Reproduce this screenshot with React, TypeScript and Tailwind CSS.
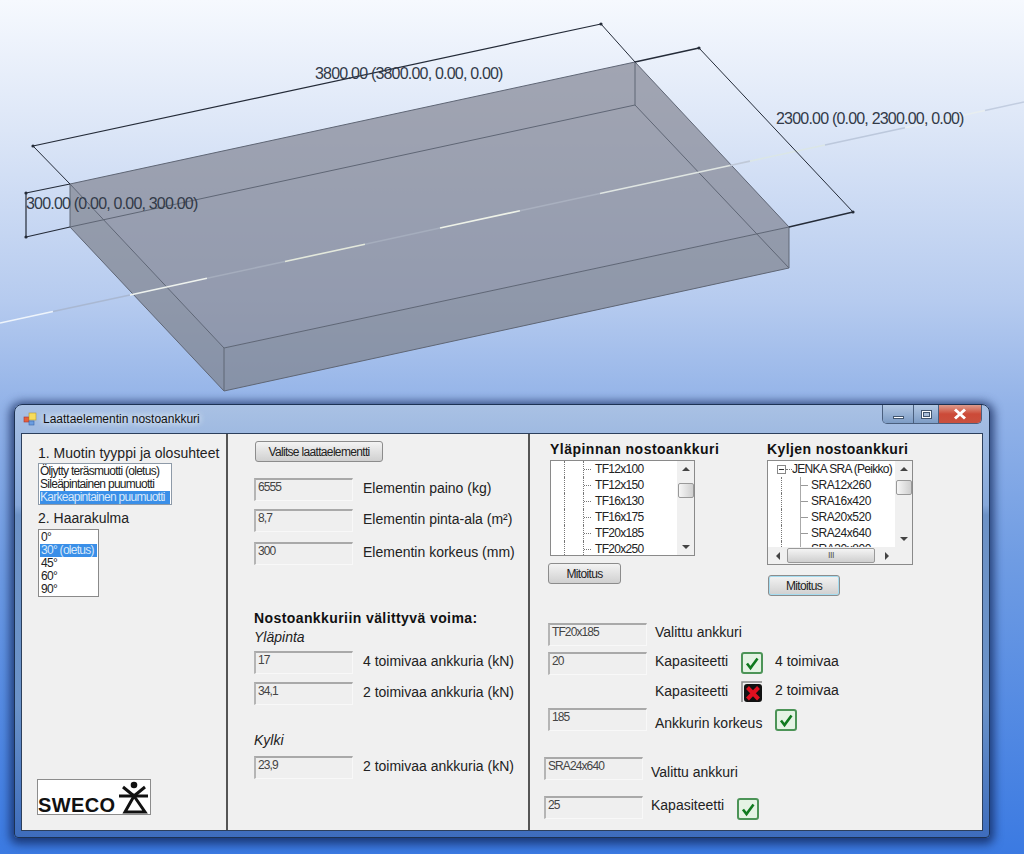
import React from 'react'

const font = "font-['Liberation_Sans',Arial,sans-serif]"

const axisSegments = [
  { x1: 0, x2: 53, color: '#eef4fb' },
  { x1: 53, x2: 130, color: '#a9b8d2' },
  { x1: 130, x2: 207, color: '#eef2ee' },
  { x1: 207, x2: 285, color: '#a5adbd' },
  { x1: 285, x2: 365, color: '#e3e8dc' },
  { x1: 365, x2: 440, color: '#a5adbd' },
  { x1: 440, x2: 520, color: '#eef2e8' },
  { x1: 520, x2: 600, color: '#a9b0bf' },
  { x1: 600, x2: 730, color: '#dfe5e2' },
  { x1: 730, x2: 750, color: '#c0c9d8' },
  { x1: 750, x2: 825, color: '#dbe6e6' },
  { x1: 825, x2: 905, color: '#bcc8dc' },
  { x1: 905, x2: 985, color: '#e8eef0' },
  { x1: 985, x2: 1024, color: '#c2cde0' },
]

const axisY = (x: number) => 323 - (x * 221) / 1024

function SlabDrawing() {
  return (
    <svg width="1024" height="404" viewBox="0 0 1024 404" className="block">
      <polygon points="70,184 635,62 789,227 224,348" fill="#858896" fillOpacity="0.72" />
      <polygon points="70,184 224,348 224,391 70,227" fill="#80838f" fillOpacity="0.72" />
      <polygon points="224,348 789,227 789,268 224,391" fill="#80838f" fillOpacity="0.72" />
      <g stroke="#5f6675" strokeWidth="1" fill="none">
        <path d="M70 184 L635 62 L789 227 L224 348 Z" />
        <path d="M70 184 V227 L224 391 V348 M224 391 L789 268 V227" />
        <path d="M70 227 L635 105 L789 268 M635 62 V105" />
      </g>
      {axisSegments.map((s, i) => (
        <line
          key={i}
          x1={s.x1}
          y1={axisY(s.x1)}
          x2={s.x2}
          y2={axisY(s.x2)}
          stroke={s.color}
          strokeWidth="1.6"
        />
      ))}
      <g stroke="#242b38" fill="none">
        <path d="M33 146 L601 24" strokeWidth="1.2" />
        <path d="M33 146 L70 184 M601 24 L635 62" strokeWidth="1" />
        <path d="M635 62 L699 48 M789 227 L853 212" strokeWidth="1.3" />
        <path d="M699 48 L853 212" strokeWidth="1" />
        <path d="M26 193 L70 184 M26 237 L70 227 M26 193 V237" strokeWidth="1.2" />
      </g>
      {[[33, 146], [601, 24], [699, 48], [853, 212], [26, 193], [26, 237]].map(([cx, cy], i) => (
        <circle key={i} cx={cx} cy={cy} r="1.6" fill="#242b38" />
      ))}
    </svg>
  )
}

function Dimension({ className, children }: { className: string; children: React.ReactNode }) {
  return (
    <span className={`absolute whitespace-nowrap text-[16px] leading-[18px] tracking-[-0.8px] text-[#323a48] ${className}`}>
      {children}
    </span>
  )
}

function Field({ value }: { value: string }) {
  return (
    <div className="h-[23px] w-[99px] shrink-0 border-t-2 border-l-2 border-t-[#a9a9a9] border-l-[#b5b5b5] border-b border-r border-b-[#f8f8f8] border-r-[#f8f8f8] bg-[#efefef] pl-[2px] text-[12px] leading-[14px] tracking-[-0.9px] text-[#444]">
      {value}
    </div>
  )
}

function Label({ children, className = '' }: { children: React.ReactNode; className?: string }) {
  return <span className={`whitespace-nowrap text-[14px] leading-[18px] text-[#222] ${className}`}>{children}</span>
}

function ValueRow({ value, label, className = '' }: { value: string; label: string; className?: string }) {
  return (
    <div className={`flex gap-[10px] ${className}`}>
      <Field value={value} />
      <Label className="leading-[20px]">{label}</Label>
    </div>
  )
}

function Button({ children, className = '' }: { children: React.ReactNode; className?: string }) {
  return (
    <button className={`h-[21px] rounded-[3px] border border-[#8c8c8c] bg-gradient-to-b from-[#f3f3f3] to-[#d0d0d0] text-center text-[12px] leading-[18px] tracking-[-0.67px] text-[#222] ${className}`}>
      {children}
    </button>
  )
}

function StatusCheck({ className = '' }: { className?: string }) {
  return (
    <svg width="22" height="22" viewBox="0 0 22 22" className={`shrink-0 ${className}`}>
      <rect x="1" y="1" width="20" height="20" rx="2" fill="#e4f3e4" stroke="#4c9457" strokeWidth="2" />
      <path d="M6 11.5 L9.5 16 L16.5 6.5" fill="none" stroke="#0f7a1e" strokeWidth="2.6" />
    </svg>
  )
}

function StatusCross() {
  return (
    <svg width="22" height="22" viewBox="0 0 22 22" className="shrink-0">
      <path d="M1 21 V1 H21" fill="none" stroke="#888" strokeWidth="1.5" />
      <rect x="3" y="3" width="18" height="18" rx="3" fill="#111" />
      <path d="M6.5 6.5 L17.5 18 M17.5 6.5 L6.5 18" stroke="#e01020" strokeWidth="4" />
    </svg>
  )
}

function Triangle({ dir }: { dir: 'up' | 'down' | 'left' | 'right' }) {
  const points = {
    up: '0,5 8,5 4,1',
    down: '0,2 8,2 4,6',
    left: '6,0 6,8 2,4',
    right: '2,0 2,8 6,4',
  }[dir]
  return (
    <svg width="8" height="8" viewBox="0 0 8 8">
      <polygon points={points} fill="#444" />
    </svg>
  )
}

function VerticalScroll({ thumbTop }: { thumbTop: string }) {
  return (
    <div className="flex w-[17px] shrink-0 flex-col items-center bg-[#f0f0f0]">
      <div className="flex h-[17px] items-center"><Triangle dir="up" /></div>
      <div className={`h-[15px] w-[16px] rounded-[2px] border border-[#999] bg-gradient-to-r from-[#f6f6f6] to-[#cfcfcf] ${thumbTop}`} />
      <div className="mt-auto flex h-[17px] items-center"><Triangle dir="down" /></div>
    </div>
  )
}

function TopTreeRow({ name }: { name: string }) {
  return (
    <div className="flex h-4 shrink-0 items-center">
      <span className="ml-[13px] h-4 w-[19px] border-l border-dotted border-[#777]" />
      <span className="flex h-4 w-[10px] items-center border-l border-dotted border-[#777]">
        <span className="w-[7px] border-t border-dotted border-[#777]" />
      </span>
      <span className="ml-[2px]">{name}</span>
    </div>
  )
}

function SideTreeRow({ name }: { name: string }) {
  return (
    <div className="flex h-4 shrink-0 items-center">
      <span className="ml-[13px] h-4 w-[19px] border-l border-dotted border-[#777]" />
      <span className="flex h-4 w-[11px] items-center border-l border-[#aaa]">
        <span className="w-[7px] border-t border-[#999]" />
      </span>
      <span>{name}</span>
    </div>
  )
}

const topAnchors = ['TF12x100', 'TF12x150', 'TF16x130', 'TF16x175', 'TF20x185', 'TF20x250']
const sideAnchors = ['SRA12x260', 'SRA16x420', 'SRA20x520', 'SRA24x640', 'SRA30x800']

function SwecoLogo() {
  return (
    <div className="-ml-px flex h-[36px] w-[114px] items-end border border-[#8c8c8c] bg-white">
      <span className="text-[20px] font-bold leading-[18px] tracking-[0.4px] text-[#111]">SWECO</span>
      <svg width="32" height="34" viewBox="0 0 32 34" className="ml-[1px] self-start">
        <circle cx="17" cy="5" r="3.3" fill="#111" />
        <path d="M2 16 H31" stroke="#111" strokeWidth="3" />
        <path d="M6 7 L17 16 L28 7" fill="none" stroke="#111" strokeWidth="3" />
        <path d="M17 16 L8 32 H28 Z" fill="none" stroke="#111" strokeWidth="3" />
      </svg>
    </div>
  )
}

function TitleBar() {
  return (
    <div className="flex h-[28px] shrink-0 items-start">
      <svg width="14" height="14" viewBox="0 0 14 14" className="ml-[2px] mt-[7px] shrink-0">
        <rect x="1" y="5" width="5" height="5" fill="#e4603a" stroke="#a33" strokeWidth="0.6" />
        <rect x="6" y="1" width="7" height="7" fill="#f7dc5c" stroke="#b99a2a" strokeWidth="0.6" />
        <rect x="6" y="9" width="5" height="4" fill="#6a9de0" stroke="#3a66a8" strokeWidth="0.6" />
      </svg>
      <span className="ml-[6px] mt-[6px] whitespace-nowrap text-[12px] leading-[16px] text-[#111] [text-shadow:0_0_6px_#eaf2fb,0_0_6px_#eaf2fb]">
        Laattaelementin nostoankkuri
      </span>
      <div className="ml-auto mr-[1px] flex h-[19px] overflow-hidden rounded-b-[5px] border border-t-0 border-[#4a5f7e]">
        <div className="flex w-[31px] items-center justify-center border-r border-[#4a5f7e] bg-gradient-to-b from-[#b2c7e3] to-[#7d9cc5]">
          <span className="mt-[6px] h-[3px] w-[11px] border border-[#42566f] bg-white" />
        </div>
        <div className="flex w-[25px] items-center justify-center border-r border-[#4a5f7e] bg-gradient-to-b from-[#b2c7e3] to-[#7d9cc5]">
          <span className="flex h-[9px] w-[11px] items-center justify-center border border-[#42566f] bg-white">
            <span className="h-[5px] w-[7px] border border-[#42566f] bg-[#a8bdd8]" />
          </span>
        </div>
        <div className="flex w-[42px] items-center justify-center bg-gradient-to-b from-[#dc9a8c] via-[#cc4a38] to-[#c9503e]">
          <svg width="14" height="12" viewBox="0 0 14 12">
            <path d="M2 1.5 L12 10.5 M12 1.5 L2 10.5" stroke="#fff" strokeWidth="3" />
          </svg>
        </div>
      </div>
    </div>
  )
}

export default function App() {
  return (
    <div className={`h-[854px] w-[1024px] overflow-hidden bg-[linear-gradient(180deg,#f6f9fe_0px,#dce6f7_130px,#b6cbef_300px,#93b3e8_404px,#6f9ce3_560px,#3b7ae2_854px)] ${font}`}>
      <div className="relative h-[404px]">
        <SlabDrawing />
        <Dimension className="left-[315px] top-[65px]">3800.00 (3800.00, 0.00, 0.00)</Dimension>
        <Dimension className="left-[776px] top-[110px]">2300.00 (0.00, 2300.00, 0.00)</Dimension>
        <Dimension className="left-[26px] top-[195px]">300.00 (0.00, 0.00, 300.00)</Dimension>
      </div>

      <div className="ml-[14px] flex h-[434px] w-[976px] flex-col rounded-t-[8px] rounded-b-[4px] border border-[#1d3253] bg-[linear-gradient(180deg,#a9c1e4_0px,#86a8da_100px,#6d92c6_110px,#6a92c8_300px,#3d6cbc_434px)] px-[6px] pb-[6px] shadow-[0_2px_10px_4px_rgba(15,35,85,0.75)]">
        <TitleBar />
        <div className="flex min-h-0 flex-1 border border-[#2c3f5c] bg-[#f0f0f0]">
          <div className="flex w-[206px] shrink-0 flex-col border-r-2 border-[#555] pb-[15px] pl-[16px] pt-[10px]">
            <span className="whitespace-nowrap text-[14px] leading-[18px] text-[#222]">1. Muotin tyyppi ja olosuhteet</span>
            <div className="mt-[1px] h-[42px] w-[134px] border border-[#8e9aa8] bg-white p-[1px] text-[12px] leading-[13px] tracking-[-0.72px] text-[#222]">
              <div className="whitespace-nowrap">Öljytty teräsmuotti (oletus)</div>
              <div className="whitespace-nowrap">Sileäpintainen puumuotti</div>
              <div className="whitespace-nowrap bg-[#3a8fe8] text-[#d8e8fa]">Karkeapintainen puumuotti</div>
            </div>
            <span className="mt-[4px] text-[14px] leading-[18px] text-[#222]">2. Haarakulma</span>
            <div className="mt-[2px] h-[68px] w-[61px] border border-[#8a8a8a] bg-white p-[1px] text-[12px] leading-[13px] tracking-[-0.72px] text-[#222]">
              <div className="px-[1px]">0°</div>
              <div className="whitespace-nowrap bg-[#3a8fe8] px-[1px] text-[#d8e8fa]">30° (oletus)</div>
              <div className="px-[1px]">45°</div>
              <div className="px-[1px]">60°</div>
              <div className="px-[1px]">90°</div>
            </div>
            <div className="mt-auto">
              <SwecoLogo />
            </div>
          </div>

          <div className="flex w-[302px] shrink-0 flex-col items-start border-r-2 border-[#555] pl-[26px] pt-[7px]">
            <Button className="ml-[1px] w-[128px]">Valitse laattaelementti</Button>
            <ValueRow className="mt-[16px]" value="6555" label="Elementin paino (kg)" />
            <ValueRow className="mt-[8px]" value="8,7" label="Elementin pinta-ala (m²)" />
            <ValueRow className="mt-[10px]" value="300" label="Elementin korkeus (mm)" />
            <span className="mt-[44px] whitespace-nowrap text-[14px] font-bold leading-[18px] tracking-[0.41px] text-[#111]">Nostoankkuriin välittyvä voima:</span>
            <span className="mt-[1px] text-[14px] italic leading-[18px] text-[#222]">Yläpinta</span>
            <ValueRow className="mt-[5px]" value="17" label="4 toimivaa ankkuria (kN)" />
            <ValueRow className="mt-[8px]" value="34,1" label="2 toimivaa ankkuria (kN)" />
            <span className="mt-[26px] text-[14px] italic leading-[18px] text-[#222]">Kylki</span>
            <ValueRow className="mt-[7px]" value="23,9" label="2 toimivaa ankkuria (kN)" />
          </div>

          <div className="flex min-w-0 flex-1 flex-col pt-[6px]">
            <div className="flex">
              <div className="ml-[20px] flex w-[217px] shrink-0 flex-col items-start">
                <span className="whitespace-nowrap text-[14px] font-bold leading-[18px] tracking-[0.48px] text-[#111]">Yläpinnan nostoankkuri</span>
                <div className="mt-[2px] flex h-[96px] w-[145px] overflow-hidden border border-[#8a8a8a] bg-white text-[12px] tracking-[-0.7px] text-[#222]">
                  <div className="flex min-w-0 flex-1 flex-col overflow-hidden">
                    {topAnchors.map((name) => (
                      <TopTreeRow key={name} name={name} />
                    ))}
                  </div>
                  <VerticalScroll thumbTop="mt-[5px]" />
                </div>
                <Button className="-ml-[2px] mt-[7px] w-[73px]">Mitoitus</Button>
              </div>

              <div className="flex flex-col items-start">
                <span className="whitespace-nowrap text-[14px] font-bold leading-[18px] tracking-[0.4px] text-[#111]">Kyljen nostoankkuri</span>
                <div className="mt-[2px] flex h-[105px] w-[146px] flex-col overflow-hidden border border-[#8a8a8a] bg-white text-[12px] tracking-[-0.45px] text-[#222]">
                  <div className="flex min-h-0 flex-1">
                    <div className="flex min-w-0 flex-1 flex-col overflow-hidden">
                      <div className="flex h-4 shrink-0 items-center whitespace-nowrap">
                        <span className="ml-[9px] flex h-[9px] w-[9px] items-center justify-center border border-[#888]">
                          <span className="w-[5px] border-t border-[#333]" />
                        </span>
                        <span className="w-[6px] border-t border-dotted border-[#777]" />
                        <span className="tracking-[-0.7px]">JENKA SRA (Peikko)</span>
                      </div>
                      {sideAnchors.map((name) => (
                        <SideTreeRow key={name} name={name} />
                      ))}
                    </div>
                    <VerticalScroll thumbTop="mt-[2px]" />
                  </div>
                  <div className="flex h-[17px] shrink-0 items-center bg-[#f0f0f0] pr-[16px]">
                    <div className="flex w-[19px] justify-center"><Triangle dir="left" /></div>
                    <div className="flex h-[15px] w-[88px] items-center justify-center rounded-[2px] border border-[#999] bg-gradient-to-b from-[#f4f4f4] to-[#cfcfcf] text-[9px] leading-none text-[#555]">III</div>
                    <div className="ml-auto flex w-[18px] justify-center"><Triangle dir="right" /></div>
                  </div>
                </div>
                <Button className="ml-[1px] mt-[10px] w-[72px] border-[#3c8fb5] shadow-[0_0_0_1px_#a4dcf0_inset]">Mitoitus</Button>
              </div>
            </div>

            <div className="ml-[18px] mt-[27px] flex gap-[8px]">
              <Field value="TF20x185" />
              <Label>Valittu ankkuri</Label>
            </div>
            <div className="ml-[18px] mt-[6px] flex gap-[8px]">
              <Field value="20" />
              <Label className="w-[78px]">Kapasiteetti</Label>
              <StatusCheck />
              <Label className="ml-[4px]">4 toimivaa</Label>
            </div>
            <div className="ml-[18px] mt-[6px] flex h-[23px] gap-[8px]">
              <div className="w-[99px]" />
              <Label className="mt-[1px] w-[78px]">Kapasiteetti</Label>
              <StatusCross />
              <Label className="ml-[4px]">2 toimivaa</Label>
            </div>
            <div className="ml-[18px] mt-[4px] flex gap-[8px]">
              <Field value="185" />
              <Label className="mt-[6px] w-[112px]">Ankkurin korkeus</Label>
              <StatusCheck className="mt-[1px]" />
            </div>
            <div className="ml-[14px] mt-[25px] flex gap-[8px]">
              <Field value="SRA24x640" />
              <Label className="mt-[6px]">Valittu ankkuri</Label>
            </div>
            <div className="ml-[14px] mt-[15px] flex gap-[8px]">
              <Field value="25" />
              <Label className="w-[78px]">Kapasiteetti</Label>
              <StatusCheck className="mt-[2px]" />
            </div>
          </div>
        </div>
      </div>
    </div>
  )
}
